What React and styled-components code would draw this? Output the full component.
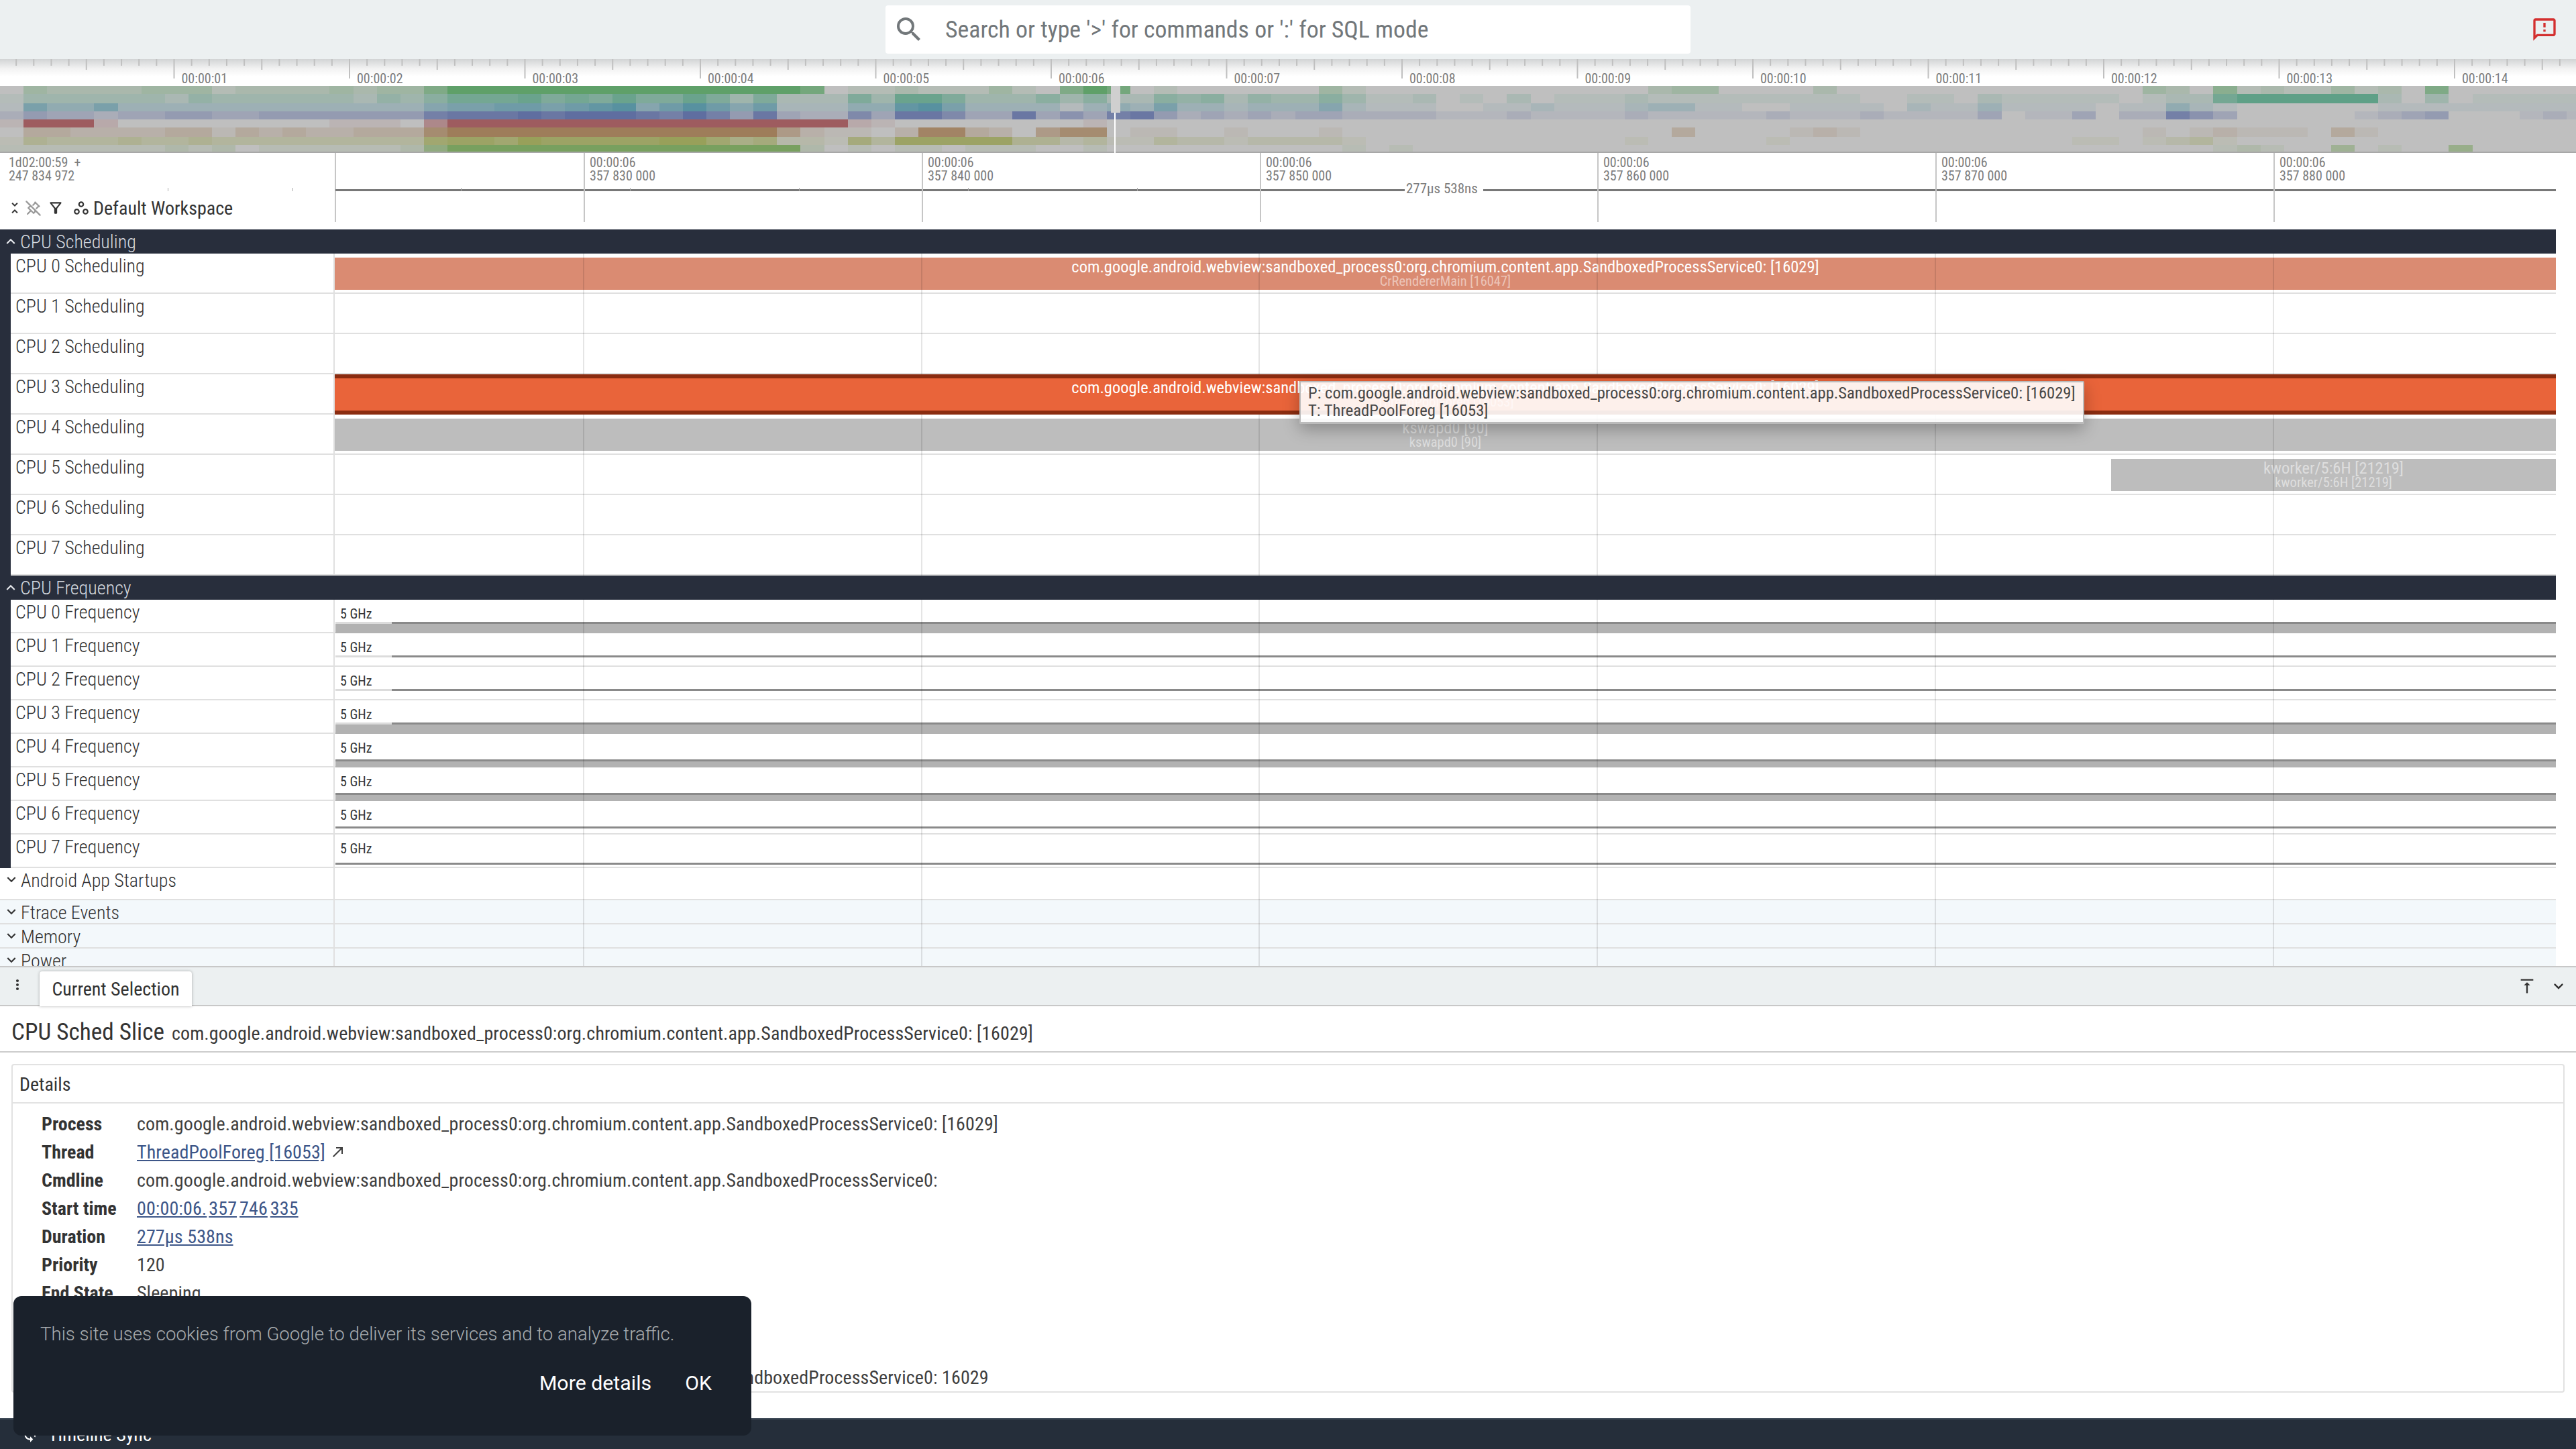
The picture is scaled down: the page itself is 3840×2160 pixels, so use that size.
import React from "react";
import styled, { createGlobalStyle } from "styled-components";
import { MdExpandLess, MdExpandMore, MdMoreVert, MdVerticalAlignTop, MdCallMade, MdOutlineFilterAlt, MdOutlineWorkspaces, MdUnfoldLess, MdSync, MdSearch, MdOutlineFeedback } from "react-icons/md";
import { TbPinnedOff } from "react-icons/tb";

const FONT = `"Roboto", "Liberation Sans", sans-serif`;
const PROC = "com.google.android.webview:sandboxed_process0:org.chromium.content.app.SandboxedProcessService0";

const Global = createGlobalStyle`
  html, body { margin: 0; padding: 0; background: #fff; }
  * { box-sizing: border-box; }
  body { font-family: ${FONT}; font-stretch: 75%; color: #333; }
`;

const Page = styled.div`
  position: relative; width: 3840px; height: 2160px; overflow: hidden;
  display: flex; flex-direction: column;
`;

/* top bar */
const TopBar = styled.header`
  height: 88px; flex: none; background: #ecf0f1; display: flex; align-items: center;
  justify-content: center; position: relative;
`;
const SearchBox = styled.div`
  width: 1200px; height: 72px; background: #fff; border-radius: 4px; display: flex;
  align-items: center; gap: 30px; padding: 0 0 0 11px; color: #72777a;
  font-size: 35.8px; font-weight: 400; line-height: 76px;
`;
const ReportIcon = styled.div`
  position: absolute; left: 3773px; top: 24px; width: 40px; height: 40px; color: #d32f2f;
  display: flex;
`;

/* overview */
const Overview = styled.section`
  height: 140px; flex: none; position: relative; background: #fff;
`;
const OverviewRuler = styled.svg`
  display: block; width: 3840px; height: 40px;
  background: linear-gradient(#d2d4d5 0, #f2f2f2 14px, #fff 26px);
`;
const Heat = styled.svg`
  display: block; width: 3840px; height: 100px;
`;
const TickText = styled.text`
  font-size: 20px; fill: #7d7d7d; font-family: ${FONT}; font-stretch: 75%;
`;

/* time header */
const TimeHeader = styled.section`
  height: 114px; flex: none; display: flex; background: #fff;
`;
const HeaderShell = styled.div`
  width: 499px; flex: none; display: flex; flex-direction: column; height: 103px;
`;
const Epoch = styled.div`
  font-size: 20px; line-height: 20px; color: #7d7d7d; padding: 4px 0 0 13px; height: 66px; white-space: pre;
`;
const WorkspaceBar = styled.div`
  display: flex; align-items: center; height: 32px; padding-left: 10px; color: #333;
  font-size: 28px;
`;
const ToolIcon = styled.span`
  display: flex; width: ${(p) => p.$w}px; color: ${(p) => p.$c || "#333"}; font-size: ${(p) => p.$s || 24}px;
`;
const HeaderCanvas = styled.div`
  flex: 1; position: relative; height: 103px;
`;
const TimeTick = styled.div`
  position: absolute; top: 0; bottom: 0; left: ${(p) => p.$x}px; width: 2px; background: #c6c6c6;
`;
const TimeLabel = styled.div`
  position: absolute; top: 4px; left: 9px; white-space: nowrap; font-size: 20px;
  line-height: 20px; color: #7d7d7d;
`;
const NoteTick = styled.div`
  position: absolute; top: 52px; height: 5px; left: ${(p) => p.$x}px; width: 1px; background: #aaa;
`;
const SpanLine = styled.div`
  position: absolute; left: 1px; right: 30px; top: 54px; height: 3px; background: #787878;
`;
const SpanLabel = styled.div`
  position: absolute; left: 1595px; top: 41px; width: 117px; height: 26px; background: #fff;
  padding-left: 2px; font-size: 21px; line-height: 24px; color: #7d7d7d; white-space: nowrap;
`;

/* tracks */
const Tracks = styled.section`
  height: 1098px; flex: none; overflow: hidden; position: relative; width: 3810px;
`;
const GroupHeader = styled.div`
  height: 36px; background: #282e3c; color: #d4d8de; display: flex; align-items: center;
  padding-left: 3px; font-size: 28px; font-weight: 300;
`;
const Chevron = styled.span`
  display: flex; width: 27px; font-size: 26px; color: ${(p) => p.$c || "#e8eaee"};
`;
const Group = styled.div`
  background: #282e3c; padding-left: 16px;
`;
const Row = styled.div`
  display: flex; height: ${(p) => p.$h}px; background: ${(p) => p.$bg || "#fff"};
  border-bottom: 2px solid #e0e0e0;
`;
const Shell = styled.div`
  width: ${(p) => p.$w || 483}px; flex: none; padding: ${(p) => p.$pad || "4px 0 0 7px"};
  font-size: 28px; font-weight: 300; color: #333; line-height: 30px; display: flex;
  border-right: 2px solid #e0e0e0; white-space: nowrap;
`;
const Canvas = styled.div`
  flex: 1; position: relative; margin-bottom: -2px;
`;
const Grid = styled.div`
  position: absolute; top: 0; bottom: 0; left: ${(p) => p.$x}px; width: 2px;
  background: rgba(0, 0, 0, 0.1); z-index: 2;
`;
const Slice = styled.div`
  position: absolute; top: 6px; height: 48px; left: ${(p) => p.$x || 0}px; right: 0;
  background: ${(p) => p.$bg}; z-index: ${(p) => (p.$sel ? 3 : 1)};
  ${(p) => (p.$sel ? `box-shadow: 0 -6px 0 #8a2c10, 0 6px 0 #8a2c10;` : "")}
  text-align: center; overflow: hidden; white-space: nowrap;
`;
const SliceTitle = styled.div`
  position: absolute; left: 0; right: 0; top: 0; line-height: 28px; font-size: 24.5px;
  color: ${(p) => p.$c || "#fff"};
`;
const SliceSub = styled.div`
  position: absolute; left: 0; right: 0; top: 24px; line-height: 22px; font-size: 20.5px;
  color: rgba(255, 255, 255, 0.5);
`;
const FreqLabel = styled.div`
  position: absolute; left: 8px; top: 11px; font-size: 20px; line-height: 20px; color: #333; z-index: 4;
`;
const FreqFill = styled.div`
  position: absolute; left: 1px; right: 0; top: ${(p) => p.$y + 1}px; bottom: 0; background: #b2b2b2;
`;
const FreqLine = styled.div`
  position: absolute; left: ${(p) => p.$x}px; right: 0; top: ${(p) => p.$y - 1}px; height: 3px; background: #8a8a8a;
`;
const FreqPale = styled.div`
  position: absolute; left: 1px; width: 84px; top: ${(p) => p.$y - 1}px; height: 3px; background: #dcdcdc;
`;
const Tooltip = styled.div`
  position: absolute; left: 1937px; top: 226px; width: 1170px; height: 64px; z-index: 9;
  background: rgba(255, 255, 255, 0.9); border: 2px solid #bbb; border-bottom-width: 3px;
  box-shadow: 0 8px 24px rgba(0, 0, 0, 0.28); padding: 3px 11px; font-size: 24.6px;
  line-height: 26px; color: #484848; white-space: nowrap; border-radius: 2px;
`;

/* drawer */
const TabBar = styled.div`
  height: 60px; flex: none; background: #ecf0f1; border-top: 2px solid #c8c8c8; border-bottom: 2px solid #c8c8c8;
  display: flex; padding-left: 14px; position: relative;
`;
const KebabBox = styled.span`
  display: flex; align-items: center; width: 45px; font-size: 24px; color: #333; margin-top: -4px;
`;
const Tab = styled.div`
  width: 227px; height: 52px; margin-top: 6px; background: #fff; border-radius: 4px 4px 0 0;
  box-shadow: 0 0 4px rgba(0, 0, 0, 0.3); display: flex; align-items: center; justify-content: center;
  font-size: 28px; color: #333; position: relative;
`;
const TabTools = styled.div`
  margin-left: auto; display: flex; align-items: center; gap: 19px; padding-right: 12px; color: #333;
`;
const Panel = styled.main`
  flex: 1; background: #fff; overflow: hidden; min-height: 0;
`;
const SelHead = styled.div`
  height: 69px; border-bottom: 2px solid #ccc; display: flex; align-items: baseline; padding: 17px 0 0 17px; gap: 11px;
`;
const SelTitle = styled.span` font-size: 35.2px; color: #333; `;
const SelSub = styled.span` font-size: 28px; letter-spacing: 0.1px; color: #3a3a3a; `;
const Card = styled.div`
  margin: 17px 17px 0 17px; border: 2px solid #e2e2e2; border-radius: 4px;
`;
const CardHead = styled.div`
  height: 57px; border-bottom: 2px solid #e2e2e2; display: flex; align-items: center; padding: 2px 0 0 10px;
  font-size: 28px; color: #333;
`;
const Fields = styled.div`
  display: grid; grid-template-columns: 142px 1fr; grid-auto-rows: 42px; padding: 9px 0 0 43px;
  align-items: center; font-size: 28px; letter-spacing: 0.1px; color: #3f3f3f; white-space: nowrap;
`;
const Key = styled.div` font-weight: 700; letter-spacing: 0; color: #333; `;
const Val = styled.div` display: flex; align-items: center; `;
const Lnk = styled.a`
  color: #3d5688; text-decoration: underline; margin-right: ${(p) => p.$mr || 0}px;
`;
const Status = styled.footer`
  height: 46px; flex: none; background: #252e3a; border-top: 2px solid #3f4a58; display: flex; align-items: center;
  padding-left: 32px; color: #fff; font-size: 28px; gap: 14px;
`;
const Cookie = styled.aside`
  position: absolute; left: 20px; top: 1932px; width: 1100px; height: 208px; border-radius: 12px; background: #1a212b;
  padding: 40px 40px 0; z-index: 20;
`;
const CookieText = styled.div` font-size: 27.6px; font-weight: 350; font-stretch: 90%; color: #a8acaf; line-height: 34px; white-space: nowrap; `;
const CookieActions = styled.div`
  display: flex; justify-content: flex-end; gap: 50px; margin-top: 38px; padding-right: 19px; font-size: 30.3px;
  font-stretch: 90%; color: #fff;
`;

/* data */
const C = [
  [95, 160, 105], [95, 160, 135], [88, 145, 160], [95, 110, 160],
  [158, 92, 95], [158, 125, 90], [152, 160, 90], [120, 160, 95],
];
const HEAT = [
  ["0322223331222232336999999999999999701", "1211131069701000000310000000000002330", "000200000000000003205121131206000000"],
  ["1333333243333332435777867686686362226", "3886333535225452433531120102011121111", "111110011021111101227999999203011111"],
  ["1644633333333333335667767895797572224", "4896333313436332333521110011211123311", "001111021131111011421000000111111111"],
  ["2433233443344444447888989998797483226", "3886338353784232323322221112111121111", "121112111130113022753000001234000121"],
  ["1999200000000011105999999999999999992", "1000000001000000000000000000000000000", "000000000000000000000000000000000000"],
  ["0332222331323223337999999999999995211", "0288320577011001000100000000000000300", "001210000000000001012111031000000000"],
  ["1433343343333333337887988888997562216", "3888884423113221222210000000000010000", "010000000000001101231000000000000000"],
  ["1111111212011111126999999999999999201", "0110111001000000000010100000000000000", "000000000000000000001210040100500000"],
];
const COL_W = 35.1;
const mix = (c, v) => {
  const a = v / 9;
  return `rgb(${c.map((x) => Math.round(191 + (x - 191) * a)).join(",")})`;
};
const pad = (s, n) => s.padEnd(n, "0").slice(0, n);

const SCHED = [0, 1, 2, 3, 4, 5, 6, 7];
const GRID = [370, 874, 1377, 1881, 2385, 2889];
const FREQ = [
  { y: 34, fill: true, pale: true }, { y: 34, pale: true }, { y: 34, pale: true }, { y: 34, fill: true, pale: true },
  { y: 39, fill: true }, { y: 39, fill: true }, { y: 39 }, { y: 43 },
];
const fmt = (n) => String(n).replace(/\B(?=(\d{3})+(?!\d))/g, " ");

function OverviewChart() {
  const ticks = [];
  for (let i = 0; i < 150; i++) {
    const x = -2 + i * 26.15;
    if (x < 0) continue;
    const major = i % 10 === 0;
    const mid = i % 5 === 0;
    ticks.push(<line key={i} x1={x} x2={x} y1={0} y2={major ? 29 : mid ? 16 : 10} stroke="#c0c0c0" strokeWidth="2" />);
  }
  const labels = Array.from({ length: 14 }, (_, i) => {
    const x = -2 + (i + 1) * 261.5;
    return <TickText key={i} x={x + 11} y={36}>{`00:00:${String(i + 1).padStart(2, "0")}`}</TickText>;
  });
  return <OverviewRuler viewBox="0 0 3840 40">{ticks}{labels}</OverviewRuler>;
}

function HeatChart() {
  const ys = [0, 12, 26, 38, 50, 62, 76, 88, 100];
  const rects = [];
  HEAT.forEach((r, ri) => {
    const s = pad(r[0], 37) + pad(r[1], 37) + pad(r[2], 36);
    [...s].forEach((ch, ci) => {
      const x0 = Math.round(ci * COL_W);
      rects.push(
        <rect key={`${ri}-${ci}`} x={x0} y={ys[ri]} width={Math.round((ci + 1) * COL_W) - x0} height={ys[ri + 1] - ys[ri]} fill={mix(C[ri], +ch)} />
      );
    });
  });
  return (
    <Heat viewBox="0 0 3840 100" shapeRendering="crispEdges">
      {rects}
      <rect x="0" y="98" width="3840" height="2" fill="#a8a8a8" />
      <rect x="1656" y="0" width="14" height="40" fill="#cfcfcf" />
      <rect x="1661" y="40" width="2" height="60" fill="#fff" />
    </Heat>
  );
}

const GridLines = () => GRID.map((x) => <Grid key={x} $x={x} />);

export default function App() {
  return (
    <Page>
      <Global />
      <TopBar>
        <SearchBox>
          <MdSearch size={48} />
          <span>Search or type '&gt;' for commands or ':' for SQL mode</span>
        </SearchBox>
        <ReportIcon><MdOutlineFeedback size={40} /></ReportIcon>
      </TopBar>

      <Overview>
        <OverviewChart />
        <HeatChart />
      </Overview>

      <TimeHeader>
        <HeaderShell>
          <Epoch>{"1d02:00:59  +"}<br />247 834 972</Epoch>
          <WorkspaceBar>
            <ToolIcon $w={26}><MdUnfoldLess /></ToolIcon>
            <ToolIcon $w={34} $c="#9a9a9a" $s={27}><TbPinnedOff /></ToolIcon>
            <ToolIcon $w={38} $s={26}><MdOutlineFilterAlt /></ToolIcon>
            <ToolIcon $w={31} $s={26}><MdOutlineWorkspaces /></ToolIcon>
            <span>Default Workspace</span>
          </WorkspaceBar>
        </HeaderShell>
        <HeaderCanvas>
          <TimeTick $x={0} />
          <SpanLine />
          {[250, 436, 687, 939, 1191, 1443, 1695].map((x) => <NoteTick key={x} $x={x - 499} />)}
          {[0, 1, 2, 3, 4, 5].map((i) => (
            <TimeTick key={i} $x={Math.round(371 + i * 503.8)}>
              <TimeLabel>00:00:06<br />{fmt(357830000 + i * 10000)}</TimeLabel>
            </TimeTick>
          ))}
          <SpanLabel>277µs 538ns</SpanLabel>
        </HeaderCanvas>
      </TimeHeader>

      <Tracks>
        <GroupHeader><Chevron><MdExpandLess /></Chevron>CPU Scheduling</GroupHeader>
        <Group>
          {SCHED.map((i) => (
            <Row key={i} $h={60}>
              <Shell>CPU {i} Scheduling</Shell>
              <Canvas>
                <GridLines />
                {i === 0 && (
                  <Slice $bg="#da8b72">
                    <SliceTitle>{PROC}: [16029]</SliceTitle>
                    <SliceSub>CrRendererMain [16047]</SliceSub>
                  </Slice>
                )}
                {i === 3 && (
                  <Slice $bg="#e9643a" $sel>
                    <SliceTitle>{PROC}: [16029]</SliceTitle>
                    <SliceSub>ThreadPoolForeg [16053]</SliceSub>
                  </Slice>
                )}
                {i === 4 && (
                  <Slice $bg="#bdbdbd">
                    <SliceTitle $c="rgba(255,255,255,0.5)">kswapd0 [90]</SliceTitle>
                    <SliceSub>kswapd0 [90]</SliceSub>
                  </Slice>
                )}
                {i === 5 && (
                  <Slice $bg="#bdbdbd" $x={2648}>
                    <SliceTitle $c="rgba(255,255,255,0.5)">kworker/5:6H [21219]</SliceTitle>
                    <SliceSub>kworker/5:6H [21219]</SliceSub>
                  </Slice>
                )}
              </Canvas>
            </Row>
          ))}
        </Group>
        <GroupHeader><Chevron><MdExpandLess /></Chevron>CPU Frequency</GroupHeader>
        <Group>
          {FREQ.map((f, i) => (
            <Row key={i} $h={50}>
              <Shell>CPU {i} Frequency</Shell>
              <Canvas>
                {f.fill && <FreqFill $y={f.y} />}
                <FreqLine $x={f.pale ? 85 : 1} $y={f.y} />
                {f.pale && <FreqPale $y={f.y} />}
                <FreqLabel>5 GHz</FreqLabel>
                <GridLines />
              </Canvas>
            </Row>
          ))}
        </Group>
        <Row $h={48}>
          <Shell $w={499} $pad="4px 0 0 4px"><Chevron $c="#333"><MdExpandMore /></Chevron>Android App Startups</Shell>
          <Canvas><GridLines /></Canvas>
        </Row>
        {["Ftrace Events", "Memory", "Power"].map((n) => (
          <Row key={n} $h={36} $bg="#f3f8fb">
            <Shell $w={499} $pad="4px 0 0 4px"><Chevron $c="#333"><MdExpandMore /></Chevron>{n}</Shell>
            <Canvas><GridLines /></Canvas>
          </Row>
        ))}
        <Tooltip>
          P: {PROC}: [16029]<br />T: ThreadPoolForeg [16053]
        </Tooltip>
      </Tracks>

      <TabBar>
        <KebabBox><MdMoreVert /></KebabBox>
        <Tab>Current Selection</Tab>
        <TabTools>
          <MdVerticalAlignTop size={28} />
          <MdExpandMore size={28} />
        </TabTools>
      </TabBar>

      <Panel>
        <SelHead>
          <SelTitle>CPU Sched Slice</SelTitle>
          <SelSub>{PROC}: [16029]</SelSub>
        </SelHead>
        <Card>
          <CardHead>Details</CardHead>
          <Fields>
            <Key>Process</Key><Val>{PROC}: [16029]</Val>
            <Key>Thread</Key><Val><Lnk>ThreadPoolForeg [16053]</Lnk>&nbsp;<MdCallMade size={24} /></Val>
            <Key>Cmdline</Key><Val>{PROC}:</Val>
            <Key>Start time</Key><Val><Lnk $mr={3}>00:00:06.</Lnk><Lnk $mr={4}>357</Lnk><Lnk $mr={4}>746</Lnk><Lnk>335</Lnk></Val>
            <Key>Duration</Key><Val><Lnk>277µs 538ns</Lnk></Val>
            <Key>Priority</Key><Val>120</Val>
            <Key>End State</Key><Val>Sleeping</Val>
            <Key>SQL ID</Key><Val>0</Val>
            <Key>Ucpu</Key><Val>3</Val>
            <Key>Name</Key><Val>{PROC}: 16029</Val>
          </Fields>
        </Card>
      </Panel>

      <Status>
        <MdSync size={26} />
        <span>Timeline Sync</span>
      </Status>

      <Cookie>
        <CookieText>This site uses cookies from Google to deliver its services and to analyze traffic.</CookieText>
        <CookieActions><span>More details</span><span>OK</span></CookieActions>
      </Cookie>
    </Page>
  );
}
